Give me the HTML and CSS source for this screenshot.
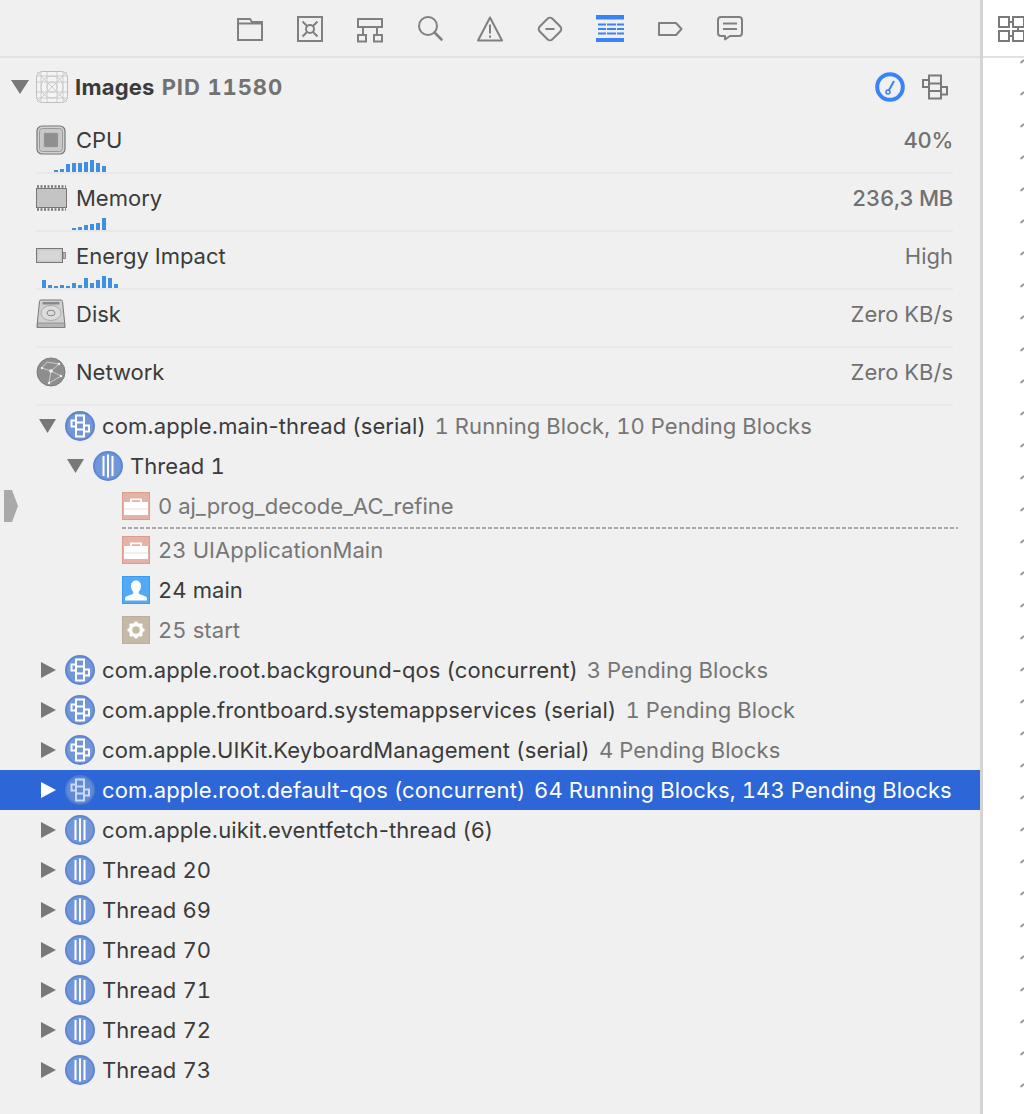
FILE: index.html
```html
<!DOCTYPE html>
<html lang="en">
<head>
<meta charset="utf-8">
<title>Debug navigator</title>
<link rel="stylesheet" href="styles.css">
</head>
<body>
<svg class="defs" aria-hidden="true">
  <defs>
    <symbol id="queue" viewBox="0 0 30 30">
      <circle cx="15" cy="15" r="14" class="disc-fill"/>
      <g fill="none" stroke="#fff" stroke-width="2">
        <rect x="11" y="4.5" width="8" height="21"/>
        <path d="M11 11.5h8M11 18.5h8"/>
        <rect x="6.5" y="9.5" width="4.5" height="6"/>
        <rect x="19" y="14.5" width="5" height="6"/>
      </g>
    </symbol>
    <symbol id="thread" viewBox="0 0 30 30">
      <circle cx="15" cy="15" r="14" class="disc-fill"/>
      <path d="M10.5 5v20M15 3.5v23M19.5 5v20" stroke="#fff" stroke-width="2" fill="none"/>
    </symbol>
    <symbol id="case" viewBox="0 0 28 28">
      <rect x=".5" y=".5" width="27" height="27" fill="#e4b3a7" stroke="#dc9c8c"/>
      <path d="M2 10h6V6.500h12V10h6v13H2z" fill="#fff"/>
      <path d="M10 8.200h8V10h-8z" fill="#e4b3a7"/>
      <path d="M2 17h24" stroke="#f3dcd6" stroke-width="1"/>
    </symbol>
  </defs>
</svg>
<div class="app">
  <aside class="nav">
    <div class="toolbar">
      <span class="tool"><svg viewBox="0 0 28 28"><path d="M2 4h12l2 3h10v18H2zM2 8.500h24"/></svg></span>
      <span class="tool"><svg viewBox="0 0 28 28"><rect x="2" y="2" width="24" height="24"/><circle cx="14" cy="14" r="4"/><path d="M6.500 6.500l4.500 4.500M21.500 6.500L17 11M6.500 21.500L11 17M21.500 21.500L17 17"/></svg></span>
      <span class="tool"><svg viewBox="0 0 28 28"><rect x="2" y="4" width="24" height="8"/><rect x="2" y="20" width="8" height="6.500"/><rect x="18" y="20" width="8" height="6.500"/><path d="M7 12v8M21 12v8"/></svg></span>
      <span class="tool"><svg viewBox="0 0 28 28"><circle cx="12" cy="11" r="9"/><path d="M18.500 17.500l7 7" stroke-linecap="round" stroke-width="2.600"/></svg></span>
      <span class="tool"><svg viewBox="0 0 28 28"><path d="M14 2.500L26 25.500H2zM14 9.500v9M14 20.500v2.200" stroke-linejoin="round"/></svg></span>
      <span class="tool"><svg viewBox="0 0 28 28"><rect x="5" y="5" width="18" height="18" rx="3.500" transform="rotate(45 14 14)"/><path d="M9.500 14h9"/></svg></span>
      <span class="tool"><svg viewBox="0 0 28 28" class="active"><path d="M0 0h30v4.500H0zM0 23h30v4H0zM2 8.500h8v2H2zM11 8.500h9v2h-9zM21 8.500h7v2h-7zM2 13h8v2H2zM11 13h9v2h-9zM21 13h7v2h-7zM2 17.500h8v2H2zM11 17.500h9v2h-9zM21 17.500h7v2h-7z"/></svg></span>
      <span class="tool"><svg viewBox="0 0 28 28"><path d="M3 8h17l5.500 6-5.500 6H3z" stroke-linejoin="round"/></svg></span>
      <span class="tool"><svg viewBox="0 0 28 28"><path d="M5 2h18a3 3 0 0 1 3 3v13a3 3 0 0 1-3 3H14l-5 3.500V21H5a3 3 0 0 1-3-3V5a3 3 0 0 1 3-3zM7 8.500h14M7 14h14" stroke-linejoin="round"/></svg></span>
    </div>

    <div class="process">
      <i class="tri-down big"></i>
      <svg class="app-icon" viewBox="0 0 32 32">
        <rect x=".5" y=".5" width="31" height="31" rx="6" fill="#f4f4f4" stroke="#bdbdbd"/>
        <g fill="none" stroke="#c4c4c4" stroke-width=".8">
          <path d="M5 1v30M11 1v30M21 1v30M27 1v30M1 5h30M1 11h30M1 21h30M1 27h30M1 1l30 30M31 1L1 31"/>
          <circle cx="16" cy="16" r="5"/><circle cx="16" cy="16" r="11"/>
        </g>
      </svg>
      <span class="proc-name">Images <b>PID 11580</b></span>
      <svg class="gauge" viewBox="0 0 30 30"><circle cx="15" cy="15" r="12.800" fill="none" stroke="#3a82f7" stroke-width="4"/><path d="M13.500 19L19 9" stroke="#3a82f7" stroke-width="2"/><circle cx="13" cy="20" r="2" fill="none" stroke="#3a82f7" stroke-width="1.500"/></svg>
      <svg class="proc-view" viewBox="0 0 26 26"><g fill="none" stroke="#7a7a7a" stroke-width="2"><rect x="7" y="1.500" width="12" height="23"/><path d="M7 9.500h12M7 17h12"/><rect x="1" y="6" width="6" height="7"/><rect x="19" y="13" width="6" height="7.500"/></g></svg>
    </div>

    <div class="metrics">
      <div class="metric">
        <div class="metric-main">
          <svg class="m-icon" viewBox="0 0 30 30"><rect x="1" y="1" width="28" height="28" rx="5" fill="#d2d2d2" stroke="#777" stroke-width="1.200"/><rect x="3.500" y="3.500" width="23" height="23" rx="3" fill="#c8c8c8" stroke="#999"/><rect x="8" y="8" width="14" height="14" fill="#8f8f8f" stroke="#a5a5a5" stroke-dasharray="1 1"/></svg>
          <span class="m-label">CPU</span><span class="m-value strong">40%</span>
        </div>
        <div class="spark s-cpu"><i style="height:2px"></i><i style="height:3px"></i><i style="height:8px"></i><i style="height:9px"></i><i style="height:9px"></i><i style="height:10px"></i><i style="height:12px"></i><i style="height:9px"></i><i style="height:6px"></i></div>
      </div>
      <div class="metric">
        <div class="metric-main">
          <svg class="m-icon wide" viewBox="0 0 31 30"><rect x=".5" y="5.500" width="30" height="19" fill="#c4c4c4" stroke="#777"/><path d="M1 3.500h29M1 26.500h29" stroke="#777" stroke-width="2.500" stroke-dasharray="2 1.500"/></svg>
          <span class="m-label">Memory</span><span class="m-value strong">236,3 MB</span>
        </div>
        <div class="spark s-mem"><i style="height:2px"></i><i style="height:3px"></i><i style="height:5px"></i><i style="height:6px"></i><i style="height:7px"></i><i style="height:12px"></i></div>
      </div>
      <div class="metric">
        <div class="metric-main">
          <svg class="m-icon" viewBox="0 0 30 30"><rect x=".5" y="7.500" width="26" height="14" fill="#cfcfcf" stroke="#777"/><rect x="2" y="9" width="23" height="11" fill="#d6d6d6" stroke="#bbb" stroke-width=".5"/><path d="M27 11.500h2.500v6H27z" fill="#bbb" stroke="#777" stroke-width=".8"/></svg>
          <span class="m-label">Energy Impact</span><span class="m-value">High</span>
        </div>
        <div class="spark s-energy"><i style="height:8px"></i><i style="height:3px"></i><i style="height:2px"></i><i style="height:3px"></i><i style="height:2px"></i><i style="height:5px"></i><i style="height:3px"></i><i style="height:10px"></i><i style="height:5px"></i><i style="height:8px"></i><i style="height:12px"></i><i style="height:10px"></i><i style="height:4px"></i></div>
      </div>
      <div class="metric">
        <div class="metric-main">
          <svg class="m-icon" viewBox="0 0 30 30"><path d="M5 1h20a1.500 1.500 0 0 1 1.500 1.500L29 27v1.500H1V27L3.500 2.500A1.500 1.500 0 0 1 5 1z" fill="#d0d0d0" stroke="#777"/><rect x="6.500" y="3" width="17" height="2.500" fill="#8a8a8a"/><ellipse cx="15" cy="14" rx="10" ry="7.500" fill="#dcdcdc" stroke="#aaa"/><ellipse cx="15" cy="14" rx="4" ry="2.800" fill="none" stroke="#888"/><rect x="1.500" y="24" width="27" height="4.500" fill="#b5b5b5" stroke="#777" stroke-width=".6"/></svg>
          <span class="m-label">Disk</span><span class="m-value">Zero KB/s</span>
        </div>
      </div>
      <div class="metric">
        <div class="metric-main">
          <svg class="m-icon" viewBox="0 0 30 30"><circle cx="15" cy="15" r="14" fill="#8e8e8e" stroke="#7c7c7c"/><path d="M15 14L6 11M15 14l8-7M15 14l-2 12M15 14l10 5M6 11l5-6 12 2M13 26l12-7" stroke="#ddd" stroke-width=".8" fill="none"/><circle cx="15" cy="14" r="1.800" fill="#f2f2f2"/><circle cx="6" cy="11" r="1.200" fill="#f2f2f2"/><circle cx="23" cy="7" r="1.200" fill="#f2f2f2"/><circle cx="25" cy="19" r="1.200" fill="#f2f2f2"/><circle cx="13" cy="26" r="1.200" fill="#f2f2f2"/></svg>
          <span class="m-label">Network</span><span class="m-value">Zero KB/s</span>
        </div>
      </div>
    </div>

    <div class="tree">
      <div class="row l1"><i class="tri-down"></i><svg class="t-icon"><use href="#queue"/></svg><span class="name hy">com.apple.main-thread (serial)</span><span class="note">1 Running Block, 10 Pending Blocks</span></div>
      <div class="row l2"><i class="tri-down"></i><svg class="t-icon"><use href="#thread"/></svg><span class="name">Thread 1</span></div>
      <div class="row l3 dim pc"><svg class="f-icon"><use href="#case"/></svg><span class="name">0 aj_prog_decode_AC_refine</span><svg class="pc-arrow" viewBox="0 0 14 32"><path d="M0 0h8l6 16-6 16H0z" fill="#a9a9a9"/></svg></div>
      <div class="dashes"></div>
      <div class="row l3 dim"><svg class="f-icon"><use href="#case"/></svg><span class="name">23 UIApplicationMain</span></div>
      <div class="row l3"><svg class="f-icon" viewBox="0 0 28 28"><rect x=".5" y=".5" width="27" height="27" fill="#52a9f5" stroke="#3f99ec"/><path d="M14 4.500c3.400 0 5 2.500 5 5.500 0 2.500-1 4.500-2.200 5.800v2c1 .8 6.700 2 7.700 3.500 .5 .8 .5 2 .5 3.200h-22c0-1.200 0-2.400 .5-3.200 1-1.500 6.700-2.700 7.700-3.500v-2C10 14.500 9 12.500 9 10c0-3 1.600-5.500 5-5.500z" fill="#fff"/></svg><span class="name">24 main</span></div>
      <div class="row l3 dim"><svg class="f-icon" viewBox="0 0 28 28"><rect x=".5" y=".5" width="27" height="27" fill="#c6b9a6" stroke="#bcae9a"/><circle cx="14" cy="14" r="5.500" fill="none" stroke="#fff" stroke-width="3.500"/><path d="M14 5.500v3M14 19.500v3M5.500 14h3M19.500 14h3M8 8l2 2M18 18l2 2M20 8l-2 2M10 18l-2 2" stroke="#fff" stroke-width="3"/></svg><span class="name">25 start</span></div>
      <div class="row l1"><i class="tri-right"></i><svg class="t-icon"><use href="#queue"/></svg><span class="name hy">com.apple.root.background-qos (concurrent)</span><span class="note">3 Pending Blocks</span></div>
      <div class="row l1"><i class="tri-right"></i><svg class="t-icon"><use href="#queue"/></svg><span class="name">com.apple.frontboard.systemappservices (serial)</span><span class="note">1 Pending Block</span></div>
      <div class="row l1"><i class="tri-right"></i><svg class="t-icon"><use href="#queue"/></svg><span class="name">com.apple.UIKit.KeyboardManagement (serial)</span><span class="note">4 Pending Blocks</span></div>
      <div class="row l1 selected"><i class="tri-right"></i><svg class="t-icon"><use href="#queue"/></svg><span class="name hy">com.apple.root.default-qos (concurrent)</span><span class="note">64 Running Blocks, 143 Pending Blocks</span></div>
      <div class="row l1"><i class="tri-right"></i><svg class="t-icon"><use href="#thread"/></svg><span class="name hy">com.apple.uikit.eventfetch-thread (6)</span></div>
      <div class="row l1"><i class="tri-right"></i><svg class="t-icon"><use href="#thread"/></svg><span class="name">Thread 20</span></div>
      <div class="row l1"><i class="tri-right"></i><svg class="t-icon"><use href="#thread"/></svg><span class="name">Thread 69</span></div>
      <div class="row l1"><i class="tri-right"></i><svg class="t-icon"><use href="#thread"/></svg><span class="name">Thread 70</span></div>
      <div class="row l1"><i class="tri-right"></i><svg class="t-icon"><use href="#thread"/></svg><span class="name">Thread 71</span></div>
      <div class="row l1"><i class="tri-right"></i><svg class="t-icon"><use href="#thread"/></svg><span class="name">Thread 72</span></div>
      <div class="row l1"><i class="tri-right"></i><svg class="t-icon"><use href="#thread"/></svg><span class="name">Thread 73</span></div>
    </div>
  </aside>

  <section class="side">
    <div class="side-top">
      <svg viewBox="0 0 26 26"><g fill="none" stroke="#7a7a7a" stroke-width="2"><rect x="1" y="1" width="10" height="10"/><rect x="15" y="1" width="11" height="10"/><rect x="1" y="15" width="10" height="10"/><rect x="15" y="15" width="11" height="10"/><path d="M11 6h4M11 20h4M20 11v4"/></g></svg>
    </div>
    <svg class="ticks" aria-hidden="true">
      <defs><pattern id="tick" width="41" height="32" patternUnits="userSpaceOnUse"><path d="M37.500 5L41 2" stroke="#9a9a9a" stroke-width="2.200" fill="none"/></pattern></defs>
      <rect width="100%" height="100%" fill="url(#tick)"/>
    </svg>
  </section>
</div>
</body>
</html>
```
FILE: styles.css
```css
* { box-sizing: border-box; }
html, body { margin: 0; height: 100%; }
body {
  font-family: Inter, "Liberation Sans", sans-serif;
  font-size: 22px;
  font-variant-numeric: tabular-nums;
  color: #3b3b3b;
  background: #fff;
  overflow: hidden;
}
i { display: block; }
.defs { position: absolute; width: 0; height: 0; }
.disc-fill { fill: #7396d8; stroke: #5c86d4; stroke-width: 2; }

.app { display: flex; height: 1114px; }
.nav {
  width: 983px;
  flex: none;
  background: #f0f0f0;
  border-right: 3px solid #d4d4d4;
}

.toolbar {
  display: flex;
  justify-content: center;
  height: 58px;
  padding-top: 15px;
  border-bottom: 2px solid #e2e2e2;
}
.tool { width: 60px; display: flex; justify-content: center; }
.tool svg {
  width: 28px;
  height: 28px;
  fill: none;
  stroke: #808080;
  stroke-width: 2;
}
.tool svg.active { fill: #3a82f7; stroke: none; }

.process {
  display: flex;
  align-items: center;
  height: 58px;
  padding-left: 11px;
  padding-right: 32px;
}
.app-icon { width: 32px; height: 32px; margin-left: 7px; }
.proc-name { margin-left: 7px; font-weight: 700; letter-spacing: .2px; flex: 1; }
.proc-name b { font-weight: 700; color: #727272; letter-spacing: .9px; margin-left: 1px; }
.gauge { width: 30px; height: 30px; }
.proc-view { width: 26px; height: 26px; margin-left: 17px; }

.tri-down {
  flex: none;
  width: 17px;
  height: 14px;
  background: #787878;
  clip-path: polygon(0 0, 100% 0, 50% 100%);
}
.tri-down.big { width: 18px; }
.tri-right {
  flex: none;
  width: 15px;
  height: 16px;
  margin-left: 2px;
  background: #787878;
  clip-path: polygon(0 0, 100% 50%, 0 100%);
}

.metrics { margin: 0 27px 0 36px; }
.metric {
  position: relative;
  height: 58px;
  padding-top: 9px;
  border-bottom: 2px solid #e8e8e8;
}
.metric-main { display: flex; align-items: center; height: 30px; }
.m-icon { width: 30px; height: 30px; flex: none; }
.m-icon.wide { width: 31px; margin-right: -1px; }
.m-label { margin-left: 10px; flex: 1; }
.m-value { color: #717171; }
.m-value.strong { font-weight: 500; letter-spacing: -.3px; }
.spark {
  position: absolute;
  bottom: 0;
  display: flex;
  align-items: flex-end;
  gap: 2px;
}
.spark i { width: 4px; background: #3f90e2; }
.s-cpu { left: 18px; }
.s-mem { left: 36px; }
.s-energy { left: 6px; }

.row {
  position: relative;
  display: flex;
  align-items: center;
  height: 40px;
  white-space: nowrap;
  letter-spacing: .07px;
}
.l1 { padding-left: 39px; }
.l2 { padding-left: 67px; }
.l3 { padding-left: 122px; }
.t-icon { width: 30px; height: 30px; margin-left: 9px; flex: none; }
.f-icon { width: 28px; height: 28px; flex: none; }
.name { margin-left: 7px; }
.name.hy { font-variant-numeric: normal; letter-spacing: .1px; }
.f-icon + .name { margin-left: 8px; }
.pc .name { letter-spacing: 0; }
.note { margin-left: 9px; color: #757575; }
.dim .name { color: #777; }
.pc-arrow { position: absolute; left: 4px; top: 4px; width: 14px; height: 32px; }
.dashes {
  height: 4px;
  margin: 0 22px 0 122px;
  background: repeating-linear-gradient(90deg, #a8a8a8 0 4px, transparent 4px 6px) 0 1px / 100% 2px no-repeat;
}
.selected { background: #2d66d6; }
.selected .name, .selected .note { color: #fff; }
.selected .tri-right { background: #fff; }
.selected .t-icon { opacity: .75; }

.side { flex: 1; display: flex; flex-direction: column; min-width: 0; }
.side-top {
  height: 58px;
  padding: 16px 0 0 15px;
  border-bottom: 2px solid #e2e2e2;
  overflow: hidden;
}
.side-top svg { display: block; width: 26px; height: 26px; }
.ticks { flex: 1; display: block; width: 100%; height: 100%; min-height: 0; }
```
